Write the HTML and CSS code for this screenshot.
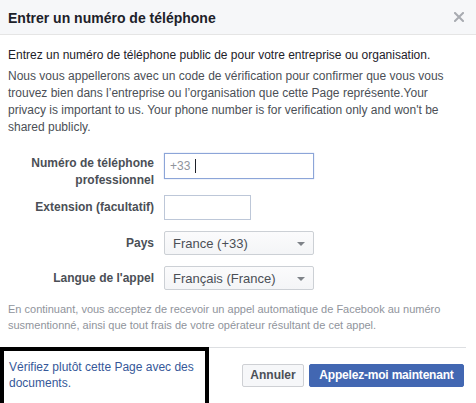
FILE: index.html
```html
<!DOCTYPE html>
<html lang="fr">
<head>
<meta charset="utf-8">
<title>Entrer un numéro de téléphone</title>
<link rel="stylesheet" href="styles.css">
</head>
<body>
<div class="dialog">
  <div class="header">
    <h2 class="title">Entrer un numéro de téléphone</h2>
    <svg class="close" width="10" height="10" viewBox="0 0 10 10"><path d="M1 1 L9 9 M9 1 L1 9" stroke="#a8abb1" stroke-width="2" stroke-linecap="square"/></svg>
  </div>
  <div class="content">
    <p class="lead">Entrez un numéro de téléphone public de pour votre entreprise ou organisation.</p>
    <p class="info">Nous vous appellerons avec un code de vérification pour confirmer que vous vous trouvez bien dans l’entreprise ou l’organisation que cette Page représente.Your privacy is important to us. Your phone number is for verification only and won't be shared publicly.</p>
    <div class="form">
      <div class="row row-top">
        <div class="label label-multi">Numéro de téléphone professionnel</div>
        <div class="field field-focus"><span class="ph">+33</span><span class="cursor"></span></div>
      </div>
      <div class="row row-ext">
        <div class="label">Extension (facultatif)</div>
        <div class="field field-short"></div>
      </div>
      <div class="row">
        <div class="label">Pays</div>
        <div class="select"><span>France (+33)</span><span class="arrow"></span></div>
      </div>
      <div class="row">
        <div class="label">Langue de l'appel</div>
        <div class="select"><span>Français (France)</span><span class="arrow"></span></div>
      </div>
    </div>
    <p class="legal">En continuant, vous acceptez de recevoir un appel automatique de Facebook au numéro susmentionné, ainsi que tout frais de votre opérateur résultant de cet appel.</p>
  </div>
  <div class="divider"></div>
  <div class="footer">
    <div class="highlight"><a class="link" href="#">Vérifiez plutôt cette Page avec des documents.</a></div>
    <div class="buttons">
      <button class="btn btn-cancel">Annuler</button>
      <button class="btn btn-primary">Appelez-moi maintenant</button>
    </div>
  </div>
</div>
</body>
</html>
```
FILE: styles.css
```css
html, body {
  margin: 0;
  padding: 0;
  background: #fff;
}
body {
  font-family: "Liberation Sans", Arial, sans-serif;
  font-size: 12px;
  color: #1d2129;
  width: 476px;
  height: 403px;
  overflow: hidden;
}
.dialog {
  width: 476px;
}
.header {
  height: 34px;
  background: #f6f7f9;
  border-bottom: 1px solid #e5e5e5;
  display: flex;
  align-items: center;
  justify-content: space-between;
  padding: 0 12px 0 8px;
}
.title {
  margin: 0;
  font-size: 14px;
  font-weight: bold;
  color: #1d2129;
  line-height: 18px;
  padding-top: 1px;
}
.close {
  display: block;
}
.content {
  padding: 12px 12px 0 8px;
}
.lead {
  margin: 0 0 4px;
  line-height: 17px;
  color: #1d2129;
}
.info {
  margin: 0;
  line-height: 17px;
  color: #4b4f56;
}
.form {
  margin-top: 17px;
}
.row {
  display: flex;
  align-items: center;
  margin-bottom: 11px;
}
.row-top {
  align-items: flex-start;
  margin-bottom: 6px;
}
.label {
  width: 146px;
  margin-right: 10px;
  text-align: right;
  font-weight: bold;
  color: #4b4f56;
  line-height: 17px;
}
.label-multi {
  padding-top: 2px;
}
.field {
  box-sizing: border-box;
  width: 150px;
  height: 26px;
  border: 1px solid #bdc7d8;
  background: #fff;
  display: flex;
  align-items: center;
  padding-left: 5px;
}
.field-focus {
  border-color: #8ca5d8;
  box-shadow: 0 0 1px #a8bde6;
}
.field-short {
  width: 87px;
  height: 25px;
}
.ph {
  color: #90949c;
  font-size: 12px;
}
.cursor {
  display: inline-block;
  width: 1px;
  height: 14px;
  background: #1d2129;
  margin-left: 5px;
}
.select {
  box-sizing: border-box;
  width: 150px;
  height: 24px;
  border: 1px solid #ccd0d5;
  border-radius: 2px;
  background: linear-gradient(#fbfbfc, #f4f5f7);
  display: flex;
  align-items: center;
  justify-content: space-between;
  padding: 0 8px 0 8px;
  color: #4b4f56;
  font-size: 13px;
}
.arrow {
  width: 0;
  height: 0;
  border-left: 4px solid transparent;
  border-right: 4px solid transparent;
  border-top: 4px solid #7f8389;
  margin-top: 1px;
}
.legal {
  margin: 5px 0 0;
  font-size: 11px;
  line-height: 16px;
  color: #90949c;
}
.divider {
  height: 1px;
  background: #dddfe2;
  margin: 14px 10px 0 12px;
}
.footer {
  display: flex;
  justify-content: space-between;
  align-items: flex-start;
  margin-top: -1px;
}
.highlight {
  box-sizing: border-box;
  width: 209px;
  height: 64px;
  border: 4px solid #000;
  background: #fff;
  padding: 8px 4px 0 5px;
}
.link {
  color: #365899;
  text-decoration: none;
  line-height: 16px;
  font-size: 12px;
}
.buttons {
  display: flex;
  gap: 5px;
  margin-top: 17px;
  margin-right: 12px;
}
.btn {
  box-sizing: border-box;
  height: 23px;
  font-family: "Liberation Sans", Arial, sans-serif;
  font-size: 12px;
  font-weight: bold;
  border-radius: 2px;
  padding: 0 4px;
  line-height: 21px;
  white-space: nowrap;
  text-align: center;
}
.btn-cancel {
  width: 62px;
  background: #f6f7f9;
  border: 1px solid #ced0d4;
  color: #4b4f56;
}
.btn-primary {
  width: 155px;
  background: #4267b2;
  border: 1px solid #4267b2;
  color: #fff;
  letter-spacing: -0.2px;
}
```
